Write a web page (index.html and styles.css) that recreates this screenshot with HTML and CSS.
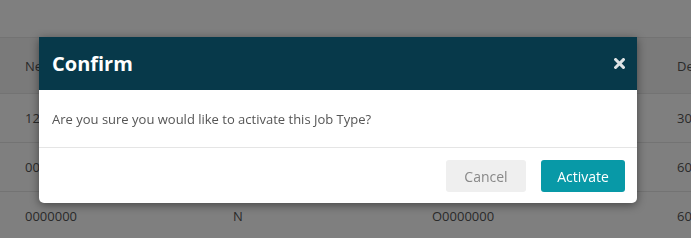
FILE: index.html
```html
<!DOCTYPE html>
<html lang="en">
<head>
  <meta charset="UTF-8">
  <meta name="viewport" content="width=device-width, initial-scale=1.0">
  <title>Job Types</title>
  <link rel="stylesheet" href="styles.css">
</head>
<body>
<div class="page">
  <div class="toolbar"></div>
  <div class="grid">
    <div class="grid-row grid-head">
      <span>Nest</span>
      <span>Active</span>
      <span>Code</span>
      <span>Description</span>
    </div>
    <div class="grid-row">
      <span>1200000</span>
      <span>Y</span>
      <span>O1200000</span>
      <span>30</span>
    </div>
    <div class="grid-row">
      <span>0000001</span>
      <span>N</span>
      <span>O0000001</span>
      <span>60</span>
    </div>
    <div class="grid-row">
      <span>0000000</span>
      <span>N</span>
      <span>O0000000</span>
      <span>60</span>
    </div>
  </div>
</div>

<!-- Modal de confirmação -->
<div class="backdrop"></div>
<div class="modal">
  <div class="modal-header">
    <h2>Confirm</h2>
    <button class="modal-close" aria-label="Close">
      <svg width="11" height="11" viewBox="0 0 11 11">
        <path d="M1.6 1.6 L9.4 9.4 M9.4 1.6 L1.6 9.4" stroke="#dde2e4" stroke-width="3" stroke-linecap="square"/>
      </svg>
    </button>
  </div>
  <div class="modal-body">
    Are you sure you would like to activate this Job Type?
  </div>
  <div class="modal-footer">
    <button class="btn btn-cancel">Cancel</button>
    <button class="btn btn-primary">Activate</button>
  </div>
</div>
</body>
</html>
```

FILE: styles.css
```css
* {
    margin: 0;
    padding: 0;
    box-sizing: border-box;
}

body {
    font-family: "Open Sans", Arial, sans-serif;
    background-color: #fff;
    color: #555;
    overflow: hidden;
    height: 100vh;
}

.toolbar {
    height: 37px;
}

.grid-row {
    display: grid;
    grid-template-columns: 208px 199px 245px 1fr;
    align-items: center;
    height: 49px;
    padding-left: 25px;
    border-top: 1px solid #e6e6e6;
    font-size: 13px;
    white-space: nowrap;
    overflow: hidden;
}

.grid-head {
    height: 56px;
    background-color: #f5f5f5;
}

/* Overlay escuro atrás do modal */
.backdrop {
    position: fixed;
    top: 0;
    left: 0;
    width: 100%;
    height: 100%;
    background-color: rgba(0, 0, 0, 0.5);
}

.modal {
    position: absolute;
    top: 37px;
    left: 39px;
    width: 598px;
    background-color: #fff;
    border-radius: 0 0 5px 5px;
    box-shadow: 0 2px 10px rgba(0, 0, 0, 0.45);
}

.modal-header {
    height: 53px;
    background-color: #07394a;
    display: flex;
    align-items: center;
    justify-content: space-between;
    padding: 0 12px 0 13px;
}

.modal-header h2 {
    color: #fff;
    font-size: 20px;
    font-weight: 700;
}

.modal-close {
    display: flex;
    border: none;
    background: none;
    cursor: pointer;
    margin-top: -1px;
}

.modal-body {
    height: 58px;
    display: flex;
    align-items: center;
    padding: 0 13px;
    font-size: 13px;
    color: #555;
    border-bottom: 1px solid #e5e5e5;
}

.modal-footer {
    display: flex;
    justify-content: flex-end;
    gap: 15px;
    padding: 12px 12px 11px;
}

.btn {
    height: 32px;
    border: none;
    border-radius: 3px;
    font-family: inherit;
    font-size: 14px;
    cursor: pointer;
}

.btn-cancel {
    width: 80px;
    background-color: #efefef;
    color: #888;
}

.btn-primary {
    width: 84px;
    background-color: #0899a7;
    color: #fff;
}
```
